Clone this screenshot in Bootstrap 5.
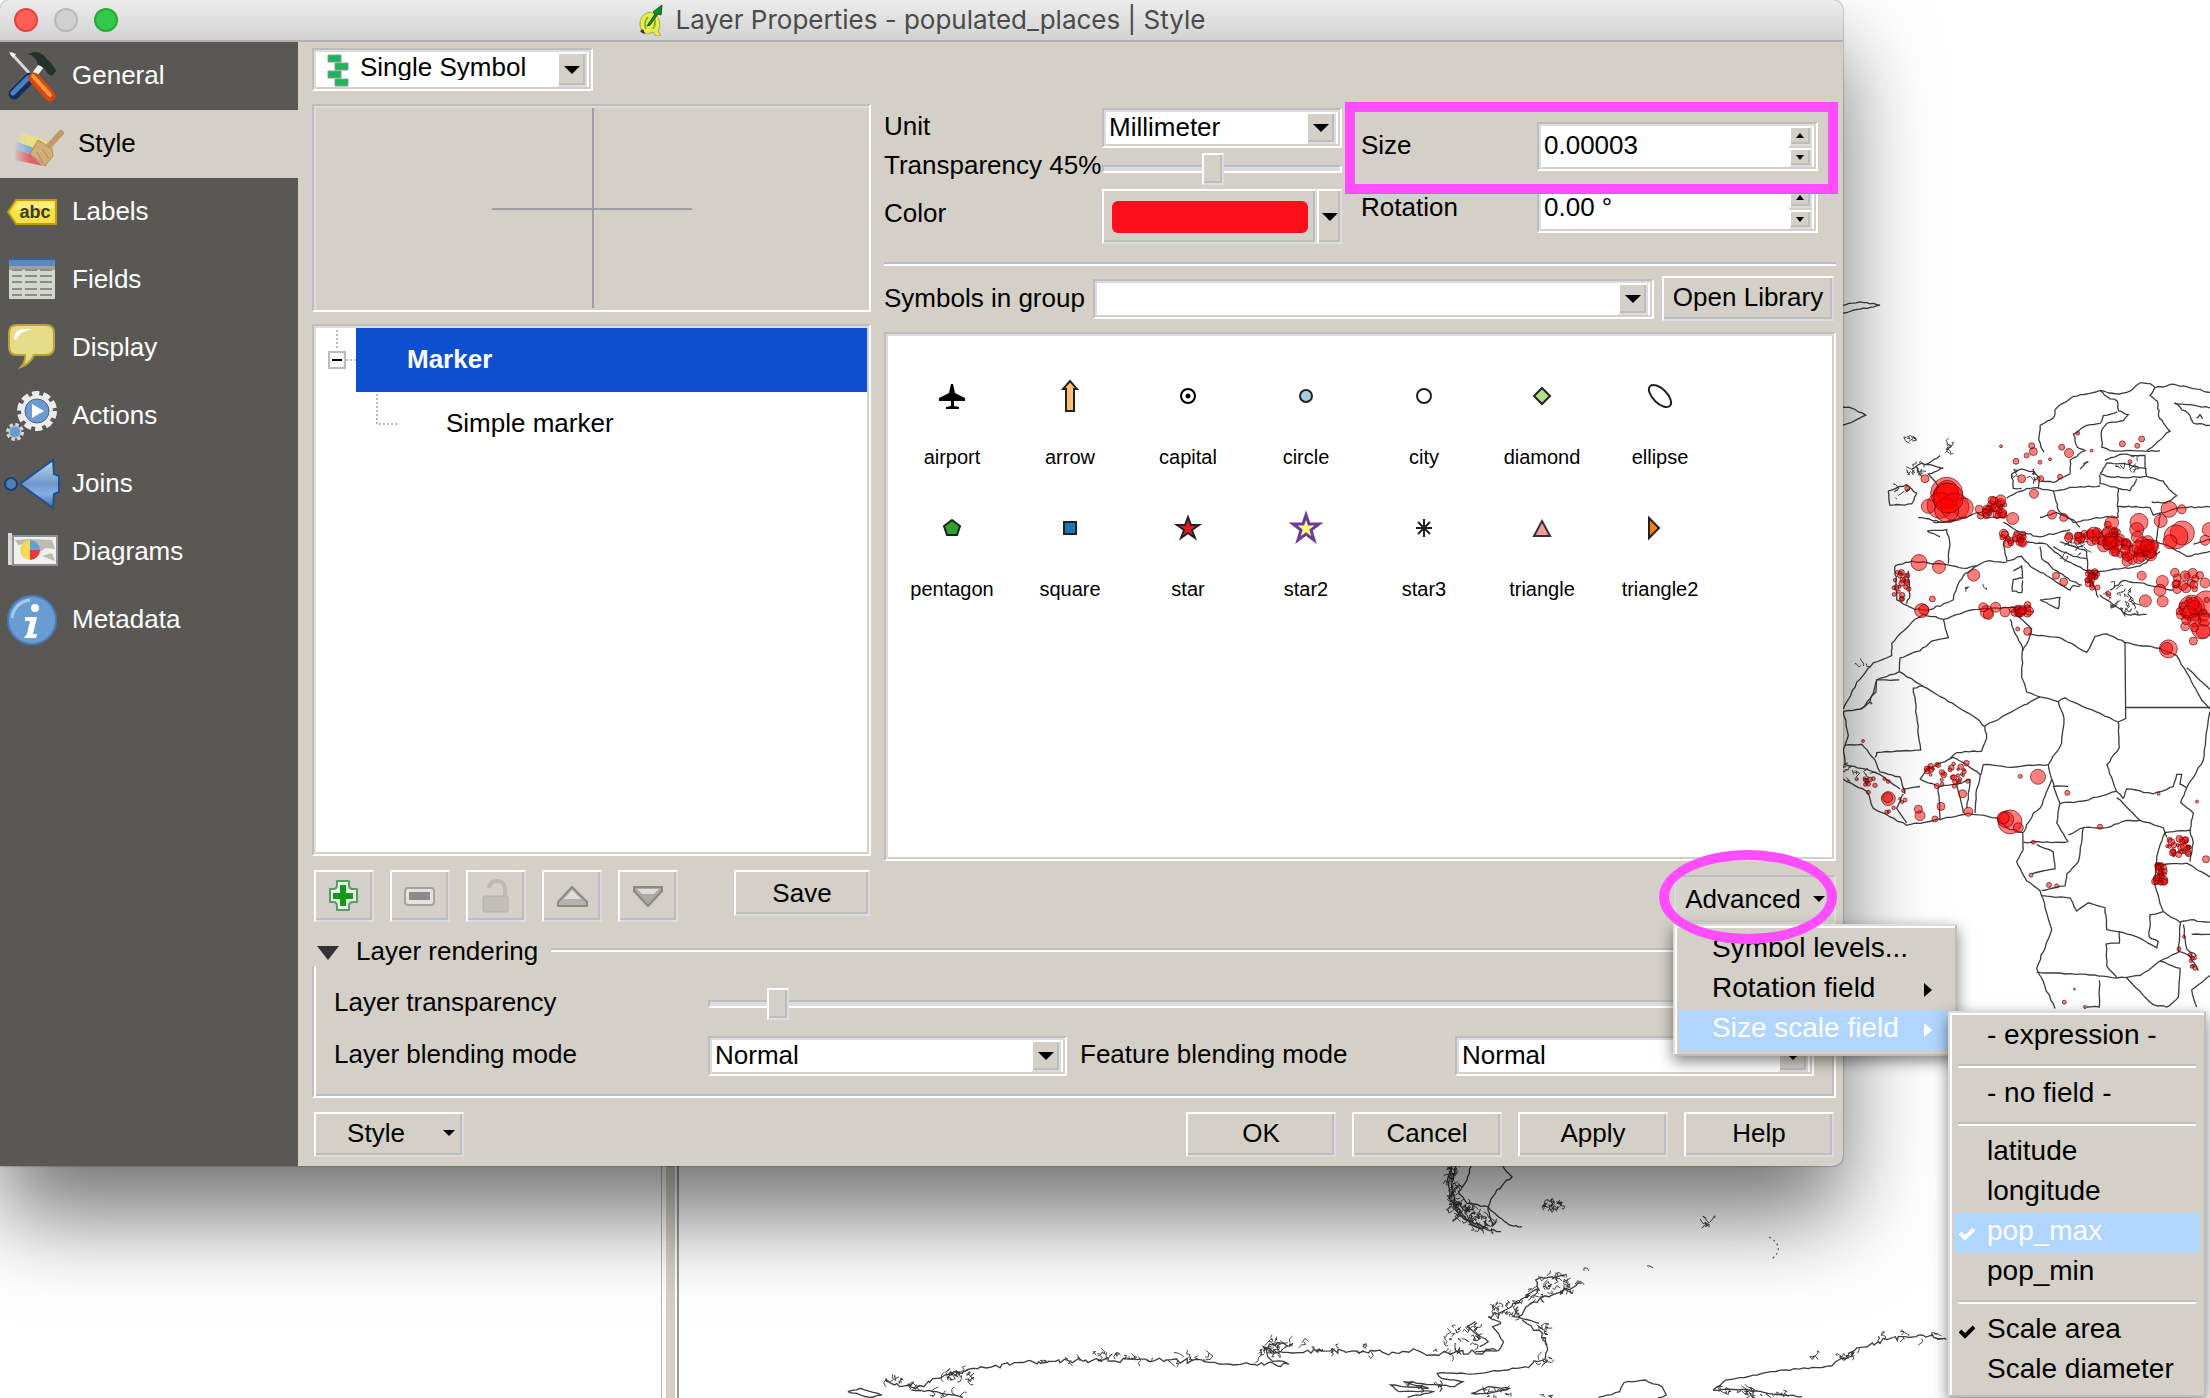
<!DOCTYPE html>
<html lang="en">
<head>
<meta charset="utf-8">
<meta name="viewport" content="width=device-width, initial-scale=1">
<title>Layer Properties - populated_places | Style</title>
<link href="https://cdn.jsdelivr.net/npm/bootstrap@5.3.0/dist/css/bootstrap.min.css" rel="stylesheet">
<style>
:root{--face:#d4d0c8;--dim:#bdbdbd;--soft:#dcdcde;--pink:#ff4dff}
body{font-family:"Liberation Sans",Arial,sans-serif;font-size:26px;line-height:30px;color:#000;background:#fff}
.desktop{min-height:100vh}
.map-canvas{inset:0;width:100%;height:100%}
.splitter{top:0;bottom:0;left:661px;width:18px;background:linear-gradient(90deg,#b5b5b0 0 1px,#fff 1px 5px,#d4d0c8 5px 14px,#fff 14px 16px,#9a9a9a 16px)}
.dialog{width:calc(100% - 367px);background:var(--face);border-radius:10px 10px 10px 0;box-shadow:0 0 2px rgba(0,0,0,.6),0 50px 90px rgba(0,0,0,.55)}
.titlebar{height:42px;gap:12px;background:linear-gradient(#ececec,#d2d2d2);border-bottom:2px solid #b1b1b1;border-radius:10px 10px 0 0;font-family:Inter,sans-serif;color:#4a4a4a}
.lights{left:14px;top:8px;gap:16px}
.light{width:24px;height:24px;padding:0;border:2px solid #e2463f;border-radius:50%;background:#ff5f57}
.light-off{background:#d0d0d0;border-color:#b9b9b9}
.light-max{background:#34c84a;border-color:#25aa35}
.side{flex:0 0 298px;background:#5a5855}
.side a{height:68px;color:#fff;text-decoration:none;padding-bottom:2px}
.side a svg{width:72px;height:68px;margin-top:2px}
.side a.active{background:var(--face);color:#000}
.side a.active svg{width:78px}
.pane{min-width:0;padding:6px 7px 9px 14px}
.right-col{min-width:0}
.sunk{border:2px solid;border-color:var(--dim) #fff #fff var(--dim);box-shadow:inset 2px 2px 0 var(--soft),inset -2px -2px 0 var(--face)}
.rise{border:2px solid;border-color:#fff var(--soft) var(--soft) #fff;box-shadow:inset -2px -2px 0 var(--dim);background:var(--face);border-radius:0;color:#000;padding:0}
.combo{height:40px;background:#fff;padding:2px 4px 2px 2px;min-width:0}
.combo select{appearance:none;border:0;background:transparent;color:#000;padding:0 0 7px 3px;outline:0;min-width:0}
.drop{width:30px;flex:0 0 30px}
.drop::after,.caret-s::after,.caret-l::after{content:"";border:8px solid transparent;border-top-color:#000;border-bottom:0}
.caret-s::after{border-width:6px 6px 0}
.combo-main{width:281px;height:43px}
.left-col{flex:0 0 559px}
.cols{gap:13px;margin-top:13px}
.preview{height:208px}
.preview svg{width:100%;height:100%}
.tree{height:532px;margin-top:12px;background:#fff;padding:2px}
.tree-row{height:64px}
.tree-row svg{flex:0 0 40px;width:40px;height:64px}
.tree-row.sub svg{flex-basis:90px;width:90px}
.tree-row .pick{background:#0c50d0;color:#fff;font-weight:700;padding:0 0 2px 51px}
.tree-row .leaf{padding:0 0 2px 40px}
.form-area{height:158px;gap:19px}
.form-l{flex:0 0 458px;padding-top:4px}
.form-l label,.form-l .lab{flex:0 0 218px;white-space:nowrap}
.form-r{min-width:0;padding:18px 18px 0 0}
.form-r label{flex:0 0 176px}
.range-row{height:41px}
.form-range{height:32px;padding:0}
.form-range::-webkit-slider-runnable-track{height:8px;border-radius:0;background:var(--soft);border:2px solid;border-color:var(--dim) #fff #fff var(--dim)}
.form-range::-webkit-slider-thumb{width:22px;height:32px;margin-top:-14px;border:2px solid;border-color:#fff var(--soft) var(--soft) #fff;box-shadow:inset -2px -2px 0 var(--dim);background:var(--face);border-radius:0}
.form-range::-webkit-slider-thumb:active{background:var(--face)}
.color-btn{width:215px;height:55px}
.swatch{width:196px;height:32px;border-radius:6px;background:#ff0d1b}
.color-arrow{width:25px;height:55px}
.spin{height:49px;background:#fff;padding:2px 4px 2px 2px;min-width:0}
.spin-gap{margin-bottom:13px}
.spin input{border:0;background:transparent;padding:0 0 4px 3px;min-width:0;outline:0}
.spin .steps{width:32px;background:var(--face);gap:2px}
.spin .steps button{flex:1}
.steps button::after{content:"";border:4px solid transparent;border-top:5px solid #000;border-bottom:0}
.steps button:first-child::after{border-top:0;border-bottom:5px solid #000}
.mark-box{inset:-20px -20px -23px -16px;border:10px solid var(--pink);pointer-events:none;z-index:3}
.etched{height:4px;border-top:2px solid var(--dim);border-bottom:2px solid #fff}
.group-row{margin-top:10px;padding-right:2px;gap:8px}
.group-row label,.open-lib{padding-bottom:2px}
.group-row .open-lib{width:172px;height:45px;padding-bottom:3px}
.symbols{height:529px;margin-top:11px;background:#fff;padding:30px 20px 0 7px;font-size:20px;line-height:26px}
.symbols figure{width:118px;height:132px;margin:0;text-align:center}
.symbols svg{width:64px;height:64px;display:block;margin:0 auto}
.symbols figcaption{margin-top:16px}
.tools{margin-top:14px;gap:16px}
.left-col .tools{padding:0 1px 0 2px}
.tool{width:60px;height:52px}
.tool svg{width:44px;height:44px;display:block;margin:auto}
.save{width:136px;height:46px;margin-left:auto}
.adv{width:162px;height:49px;background:#d6d3cc;border:2px solid;border-color:var(--dim) #e4e2de #e4e2de var(--soft);padding:0 0 2px;gap:12px;color:#000}
.mark-oval{left:-15px;top:-25px;width:178px;height:94px;border:10px solid var(--pink);border-radius:50%;pointer-events:none;z-index:9}
.pop{background:var(--face);border:2px solid;border-color:#dcdcdc var(--dim) var(--dim) #dcdcdc;box-shadow:inset 2px 2px 0 #fff,0 5px 14px rgba(0,0,0,.5);border-radius:0;padding:4px;font-size:28px;line-height:40px}
.pop-adv{left:-1px;top:49px;width:284px;z-index:5}
.pop-sub{left:273px;top:85px;width:258px;z-index:6}
.pop button{display:flex;align-items:center;width:100%;height:40px;border:0;background:transparent;color:#000;padding:0 0 4px 33px;text-align:left}
.pop button svg{width:14px;height:18px;margin:4px 16px 0 auto}
.pop-sub button{padding-left:33px;position:relative}
.pop-sub button svg{position:absolute;left:5px;top:12px;width:16px;height:18px;margin:0}
.pop button.lit{background:#b0d6ff;color:#fff}
.pop .etched{margin:7px 4px}
.group-head{height:28px;margin-top:14px}
.group-head button{border:0;background:transparent;padding:0 0 0 2px;color:#000;gap:16px}
.group-head button svg{width:26px;height:20px}
.group-line{height:18px;margin-left:13px;border-top:2px solid var(--dim);border-right:2px solid #fff;box-shadow:inset 0 2px 0 #fff,inset -2px 0 0 var(--dim)}
.group-body{height:132px;border:2px solid;border-color:transparent #fff #fff var(--dim);border-top:0;box-shadow:inset 2px 0 0 #fff,inset -2px -2px 0 var(--dim);padding:22px 20px 0 20px;gap:16px}
.group-body .line-a{height:32px}
.group-body .line-b{height:40px}
.group-body label{flex:0 0 374px;padding-bottom:4px}
.group-body .second{flex:0 0 375px;margin-left:13px}
.foot{margin-top:14px;gap:16px;padding:0 2px}
.foot button{width:150px;height:45px;padding-bottom:3px}
.foot .caret-s{gap:38px;padding-left:24px}
</style>
</head>
<body>
<div class="desktop position-relative overflow-hidden">
  <svg class="map-canvas position-absolute" id="map" viewBox="0 0 2210 1398" preserveAspectRatio="xMaxYMin slice" aria-label="World map"></svg>
  <div class="splitter position-absolute"></div>

  <div class="dialog position-relative">
    <div class="titlebar d-flex justify-content-center align-items-center position-relative">
      <div class="lights d-flex position-absolute">
        <button class="light" aria-label="Close"></button><button class="light light-off" aria-label="Minimize"></button><button class="light light-max" aria-label="Zoom"></button>
      </div>
      <svg width="26" height="32" viewBox="0 0 26 32"><path d="M12 8C6 9 2 14 2 20c0 5 3 9 8 10l5-2 3 4h5l-3-5c3-5 2-12-2-16z" fill="#e4ec4e" stroke="#a3ab3c"/><path d="M10 13c-3 3-4 8-2 12M16 14c2 4 1 8-1 11" stroke="#9ea63a" stroke-width="2" fill="none"/><path d="M9 22l8-12-2-2 9-7-1 10-3-1-8 11z" fill="#168c22" stroke="#0c5c14"/><path d="M2 27l3-2 2 5-3-1z" fill="#333"/></svg>
      <span>Layer Properties - populated_places | Style</span>
    </div>

    <div class="d-flex">
      <nav class="side d-flex flex-column">
        <a href="#" class="d-flex align-items-center"><svg viewBox="0 0 72 68"><path d="M11 11l20 22" stroke="#d8d8d8" stroke-width="3"/><path d="M9 10l7 2-3 4z" fill="#fff"/><path d="M30 36L14 52" stroke="#152f5c" stroke-width="11" stroke-linecap="round"/><path d="M28 36L13 51" stroke="#4a7fc0" stroke-width="5" stroke-linecap="round"/><path d="M35 32l6-8" stroke="#eee" stroke-width="6"/><path d="M28 12c8-4 15-1 18 4 4 4 7 6 10 13l-4 5-5-3c-1-4-5-7-9-8-1-5-4-9-10-11z" fill="#26302f"/><path d="M34 36l16 18" stroke="#d8480c" stroke-width="11" stroke-linecap="round"/><path d="M33 34l17 19" stroke="#ff9a3c" stroke-width="4" stroke-linecap="round" stroke-dasharray="5 2"/></svg>General</a>
        <a href="#" class="d-flex align-items-center active"><svg viewBox="0 0 78 68"><defs><linearGradient id="fade"><stop offset="0" stop-color="#fff" stop-opacity="0"/><stop offset=".3" stop-color="#fff"/></linearGradient><mask id="fm"><rect x="12" width="60" height="68" fill="url(#fade)"/></mask></defs><g mask="url(#fm)"><path d="M20 22l28 10-6 9-24-9z" fill="#e9e27c"/><path d="M17 32l24 8-6 6-20-5z" fill="#7fabdd"/><path d="M16 40l14 4 13 12-28-6z" fill="#e0636c"/></g><path d="M61 23L49 36" stroke="#c29b62" stroke-width="6" stroke-linecap="round"/><path d="M38 30l14 9 1 7-8 10-15-12z" fill="#d1ae78" stroke="#b08a54"/><path d="M37 42l6 11M42 39l7 10" stroke="#b08a54"/></svg>Style</a>
        <a href="#" class="d-flex align-items-center"><svg viewBox="0 0 72 68"><path d="M8 34l8-12h40v24H16z" fill="#f8e142" stroke="#c09a14" stroke-width="2" stroke-linejoin="round"/><path d="M14 32l5-8h35v6z" fill="#fff59a" opacity=".6"/><text x="35" y="40" font-size="18" font-weight="700" text-anchor="middle" fill="#3a3a30" font-family="Liberation Sans">abc</text></svg>Labels</a>
        <a href="#" class="d-flex align-items-center"><svg viewBox="0 0 72 68"><path d="M9 12h46v41H9z" fill="#d3d6cf"/><path d="M9 12h46v8H9z" fill="#5b88c0"/><path d="M9 12h46v2H9z" fill="#3a5f92"/><path d="M9 20h46v4H9z" fill="#a0a29c"/><path d="M12 24h10m3 0h12m3 0h12M12 30h10m3 0h12m3 0h12M12 36h10m3 0h12m3 0h12M12 43h10m3 0h12m3 0h12M12 49h10m3 0h12m3 0h12" stroke="#8a8c86" stroke-width="2"/></svg>Fields</a>
        <a href="#" class="d-flex align-items-center"><svg viewBox="0 0 72 68"><path d="M17 11h29q8 0 8 8v14q0 8-8 8H34q-4 9-13 12 5-6 4-12h-8q-8 0-8-8V19q0-8 8-8z" fill="#e6db86" stroke="#b8a03a" stroke-width="2"/><path d="M14 25q0-9 9-10h10q-13 2-17 11z" fill="#fff"/></svg>Display</a>
        <a href="#" class="d-flex align-items-center"><svg viewBox="0 0 72 68"><circle cx="37" cy="29" r="17" fill="none" stroke="#ececec" stroke-width="6" stroke-dasharray="7 3.7"/><circle cx="37" cy="29" r="14" fill="#6d9bd0" stroke="#ececec" stroke-width="4"/><circle cx="37" cy="29" r="12" fill="none" stroke="#3f6496"/><path d="M32 22l12 7-12 7z" fill="#fff"/><circle cx="15" cy="50" r="7.500" fill="none" stroke="#d8d8d8" stroke-width="3" stroke-dasharray="3.500 2.400"/><circle cx="15" cy="50" r="6" fill="#6d9bd0" stroke="#d8d8d8"/></svg>Actions</a>
        <a href="#" class="d-flex align-items-center"><svg viewBox="0 0 72 68"><defs><linearGradient id="jn" x2="0" y2="1"><stop offset="0" stop-color="#b5dcec"/><stop offset=".5" stop-color="#6f98cc"/><stop offset=".7" stop-color="#86aee8"/><stop offset="1" stop-color="#3c70a8"/></linearGradient></defs><circle cx="11" cy="34" r="6" fill="#4d7fb8" stroke="#1e3f6e" stroke-width="2"/><path d="M20 34l33-24 1 14 5 2v16l-5 2-1 14z" fill="url(#jn)" stroke="#23508c" stroke-width="2"/></svg>Joins</a>
        <a href="#" class="d-flex align-items-center"><svg viewBox="0 0 72 68"><path d="M13 18h44v29H13z" fill="#f0f1ee" stroke="#8d9094" stroke-width="2"/><path d="M30 21l22 1 3 9-9-1-6 4-6-9-16 2-3-5zM42 38l10-3 3 8z" fill="#b9bdb2"/><path d="M8 15h4v32H8z" fill="#d8d8d8"/><circle cx="30" cy="32" r="10" fill="#f2d95a"/><path d="M30 32V22a10 10 0 0 1 10 10z" fill="#6d9bd0"/><path d="M30 32h10a10 10 0 0 1-10 10z" fill="#e03a3a"/></svg>Diagrams</a>
        <a href="#" class="d-flex align-items-center"><svg viewBox="0 0 72 68"><circle cx="32" cy="34" r="24" fill="#6a9cd4" stroke="#4a7cb8" stroke-width="2"/><path d="M12 32a20 20 0 0 1 18-18" stroke="#a9c8ea" stroke-width="3" fill="none"/><circle cx="35" cy="22" r="4" fill="#fff"/><path d="M25 31h12l-4 17h4l-1 4H24l3-4h0l3-13h-5z" fill="#fff"/></svg>Metadata</a>
      </nav>

      <main class="pane flex-grow-1">
        <div class="combo combo-main sunk d-flex align-items-stretch">
          <svg width="36" height="36" viewBox="0 0 36 36"><g fill="#1fb45a" stroke="#8a9a90" stroke-width="1"><path d="M12 3h13v7H12zM19 11h13v7H19zM12 19h13v7H12zM19 27h13v7H19z"/></g></svg>
          <select class="flex-grow-1 ps-2" aria-label="Renderer"><option>Single Symbol</option></select><span class="drop rise d-flex align-items-center justify-content-center"></span>
        </div>

        <div class="cols d-flex">
          <section class="left-col">
            <div class="preview sunk"><svg viewBox="0 0 555 204"><path d="M279 2v200M178 103h200" stroke="#a0a0a4" stroke-width="2"/></svg></div>
            <div class="tree sunk">
              <div class="tree-row d-flex"><svg viewBox="0 0 40 64"><path d="M21 2v20M30 32h10" stroke="#bbb" stroke-width="2" stroke-dasharray="2 2"/><path d="M13 24h16v16H13z" fill="#fff" stroke="#bbb" stroke-width="2"/><path d="M16 32h10" stroke="#000" stroke-width="2"/></svg><div class="pick flex-grow-1 d-flex align-items-center">Marker</div></div>
              <div class="tree-row sub d-flex align-items-center"><svg viewBox="0 0 90 64"><path d="M61 2v30h20" fill="none" stroke="#bbb" stroke-width="2" stroke-dasharray="2 2"/></svg><span class="leaf">Simple marker</span></div>
            </div>
            <div class="tools d-flex align-items-start">
              <button class="tool rise" aria-label="Add"><svg viewBox="0 0 44 44"><path d="M15 7h12v4q0 4 4 4h4v13h-4q-4 0-4 4v4H15v-4q0-4-4-4H8V15h3q4 0 4-4z" fill="#e6f2e2" stroke="#5b9a66" stroke-width="2" stroke-linejoin="round"/><path d="M18 11h6v8h7v6h-7v7h-6v-7h-7v-6h7z" fill="#149a1a"/></svg></button>
              <button class="tool rise" aria-label="Remove"><svg viewBox="0 0 44 44"><rect x="7" y="14" width="29" height="17" rx="3" fill="#e4e2de" stroke="#a5a39e" stroke-width="2"/><path d="M11 18h21v8H11z" fill="#8c8b88"/></svg></button>
              <button class="tool rise" aria-label="Lock"><svg viewBox="0 0 44 44"><path d="M15 14q1-7 8-7t8 7v9" fill="none" stroke="#bdbab3" stroke-width="4"/><rect x="9" y="22" width="25" height="16" rx="2" fill="#c2bfb8" stroke="#b3b0a9"/></svg></button>
              <button class="tool rise" aria-label="Move up"><svg viewBox="0 0 44 44"><path d="M22 13L8 28v4h29v-4z" fill="#b4b2ad" stroke="#8b8985" stroke-width="2" stroke-linejoin="round"/><path d="M22 16l-8 9h17z" fill="#e0deda"/></svg></button>
              <button class="tool rise" aria-label="Move down"><svg viewBox="0 0 44 44"><path d="M22 32L8 17v-4h28v4z" fill="#aaa8a3" stroke="#8b8985" stroke-width="2" stroke-linejoin="round"/><path d="M11 15h22l-5 5H16z" fill="#dddbd6"/></svg></button>
              <button class="save rise">Save</button>
            </div>
          </section>

          <section class="right-col flex-grow-1">
            <div class="form-area d-flex">
              <div class="form-l">
                <div class="d-flex align-items-center"><label for="unit" class="pb-1">Unit</label><div class="combo sunk d-flex flex-grow-1"><select id="unit" class="flex-grow-1"><option>Millimeter</option></select><span class="drop rise d-flex align-items-center justify-content-center"></span></div></div>
                <div class="range-row d-flex align-items-center"><label for="tr" class="pb-2">Transparency 45%</label><input id="tr" type="range" class="form-range" value="46"></div>
                <div class="d-flex align-items-center"><span class="lab pb-2">Color</span><button class="color-btn rise d-flex align-items-center justify-content-center" aria-label="Color"><span class="swatch"></span></button><button class="color-arrow rise caret-l d-flex align-items-center justify-content-center" aria-label="Color menu"></button></div>
              </div>
              <div class="form-r flex-grow-1">
                <div class="spin-gap position-relative d-flex align-items-center"><label for="sz" class="pb-1">Size</label><div class="spin sunk d-flex flex-grow-1"><input id="sz" class="flex-grow-1" value="0.00003"><span class="steps d-flex flex-column"><button class="rise d-flex align-items-center justify-content-center" aria-label="Up"></button><button class="rise d-flex align-items-center justify-content-center" aria-label="Down"></button></span></div><div class="mark-box position-absolute"></div></div>
                <div class="d-flex align-items-center"><label for="rot" class="pb-1">Rotation</label><div class="spin sunk d-flex flex-grow-1"><input id="rot" class="flex-grow-1" value="0.00 °"><span class="steps d-flex flex-column"><button class="rise d-flex align-items-center justify-content-center" aria-label="Up"></button><button class="rise d-flex align-items-center justify-content-center" aria-label="Down"></button></span></div></div>
              </div>
            </div>
            <div class="etched"></div>
            <div class="group-row d-flex align-items-center"><label for="grp">Symbols in group</label><div class="combo sunk d-flex flex-grow-1"><select id="grp" class="flex-grow-1"><option></option></select><span class="drop rise d-flex align-items-center justify-content-center"></span></div><button class="open-lib rise">Open Library</button></div>

            <div class="symbols sunk d-flex flex-wrap align-content-start">
              <figure><svg viewBox="-32 -32 64 64"><path d="M-1-12h2l2 9 10 5v3H2l0 5 5 1v2H-6v-2l5-1V5h-12V2l10-5z"/></svg><figcaption>airport</figcaption></figure>
              <figure><svg viewBox="-32 -32 64 64"><path d="M-4 15V-7h-3l7-8 7 8H4v22z" fill="#fdbf6f" stroke="#222" stroke-width="2"/></svg><figcaption>arrow</figcaption></figure>
              <figure><svg viewBox="-32 -32 64 64"><circle r="7" fill="#fff" stroke="#000" stroke-width="2"/><circle r="2.500"/></svg><figcaption>capital</figcaption></figure>
              <figure><svg viewBox="-32 -32 64 64"><circle r="6" fill="#a6cee3" stroke="#222" stroke-width="2"/></svg><figcaption>circle</figcaption></figure>
              <figure><svg viewBox="-32 -32 64 64"><circle r="7" fill="#fff" stroke="#222" stroke-width="2"/></svg><figcaption>city</figcaption></figure>
              <figure><svg viewBox="-32 -32 64 64"><path d="M0-8l8 8-8 8-8-8z" fill="#b2df8a" stroke="#222" stroke-width="2"/></svg><figcaption>diamond</figcaption></figure>
              <figure><svg viewBox="-32 -32 64 64"><ellipse rx="14" ry="7" transform="rotate(45)" fill="#fff" stroke="#222" stroke-width="2"/></svg><figcaption>ellipse</figcaption></figure>
              <figure><svg viewBox="-32 -32 64 64"><path d="M0-8l8 6-3 9H-5l-3-9z" fill="#33a02c" stroke="#123" stroke-width="2"/></svg><figcaption>pentagon</figcaption></figure>
              <figure><svg viewBox="-32 -32 64 64"><path d="M-6-6H6V6H-6z" fill="#1f78b4" stroke="#222" stroke-width="2"/></svg><figcaption>square</figcaption></figure>
              <figure><svg viewBox="-32 -32 64 64"><path d="M0-11l3 8h8L4 2l3 8-7-5-7 5 3-8-7-5h8z" fill="#e31a1c" stroke="#222" stroke-width="2"/></svg><figcaption>star</figcaption></figure>
              <figure><svg viewBox="-32 -32 64 64"><path d="M0-13l3 9h10L5 2l3 10-8-6-8 6 3-10-8-6h10z" fill="#ffff80" stroke="#6a3d9a" stroke-width="3"/></svg><figcaption>star2</figcaption></figure>
              <figure><svg viewBox="-32 -32 64 64"><path d="M0-9V9M-8 0H8M-6-6L6 6M6-6L-6 6" stroke="#222" stroke-width="2"/></svg><figcaption>star3</figcaption></figure>
              <figure><svg viewBox="-32 -32 64 64"><path d="M0-7l8 15H-8z" fill="#fb9a99" stroke="#333" stroke-width="2"/></svg><figcaption>triangle</figcaption></figure>
              <figure><svg viewBox="-32 -32 64 64"><path d="M-11-10L-1 0l-10 10z" fill="#ff7f00" stroke="#222" stroke-width="2"/></svg><figcaption>triangle2</figcaption></figure>
            </div>

            <div class="tools d-flex justify-content-end">
              <div class="position-relative">
                <button class="adv caret-s d-flex align-items-center justify-content-center">Advanced</button>
                <div class="pop pop-adv position-absolute">
                  <button>Symbol levels...</button>
                  <button>Rotation field<svg viewBox="0 0 14 18"><path d="M3 2l8 7-8 7z"/></svg></button>
                  <button class="lit">Size scale field<svg viewBox="0 0 14 18"><path d="M3 2l8 7-8 7z" fill="#fff"/></svg></button>
                  <div class="pop pop-sub position-absolute">
                    <button>- expression -</button>
                    <div class="etched"></div>
                    <button>- no field -</button>
                    <div class="etched"></div>
                    <button>latitude</button>
                    <button>longitude</button>
                    <button class="lit"><svg viewBox="0 0 16 18"><path d="M1 8l5 5L15 4" fill="none" stroke="#fff" stroke-width="4"/></svg>pop_max</button>
                    <button>pop_min</button>
                    <div class="etched"></div>
                    <button><svg viewBox="0 0 16 18"><path d="M1 8l5 5L15 4" fill="none" stroke="#000" stroke-width="4"/></svg>Scale area</button>
                    <button>Scale diameter</button>
                  </div>
                </div>
                <div class="mark-oval position-absolute"></div>
              </div>
            </div>
          </section>
        </div>

        <div class="group-head d-flex align-items-end"><button class="d-flex align-items-center"><svg viewBox="0 0 26 20"><path d="M3 5h22L14 19z" fill="#333"/></svg><span>Layer rendering</span></button><div class="group-line flex-grow-1"></div></div>
        <div class="group-body d-flex flex-column">
          <div class="line-a d-flex align-items-center"><label for="lt">Layer transparency</label><input id="lt" type="range" class="form-range" max="1000" value="53"></div>
          <div class="line-b d-flex align-items-center"><label for="lb">Layer blending mode</label><div class="combo sunk d-flex flex-grow-1"><select id="lb" class="flex-grow-1"><option>Normal</option></select><span class="drop rise d-flex align-items-center justify-content-center"></span></div>
          <label for="fb" class="second">Feature blending mode</label><div class="combo sunk d-flex flex-grow-1"><select id="fb" class="flex-grow-1"><option>Normal</option></select><span class="drop rise d-flex align-items-center justify-content-center"></span></div></div>
        </div>

        <div class="foot d-flex">
          <button class="rise caret-s d-flex align-items-center justify-content-center me-auto">Style</button>
          <button class="rise">OK</button><button class="rise">Cancel</button><button class="rise">Apply</button><button class="rise">Help</button>
        </div>
      </main>
    </div>
  </div>
</div>

<script src="https://cdn.jsdelivr.net/npm/bootstrap@5.3.0/dist/js/bootstrap.bundle.min.js"></script>
<script>
// Country outlines are stored in two sheets, each with its own origin and scale.
const map = document.getElementById('map');
let seed = 7;
const rnd = () => (seed = (seed * 16807) % 2147483647) / 2147483647;
const sheets = { n: [1840, 280, 1 / 3, 760 / 1568], s: [640, 1160, 1330 / 1568, 1 / 3] };
function add(tag, at) {
  const e = document.createElementNS('http://www.w3.org/2000/svg', tag);
  for (const k in at) e.setAttribute(k, at[k]);
  map.appendChild(e);
}
// Draws each "x y x y ..." run, breaking long legs into small uneven steps.
function lines(sheet, amp, step, text) {
  const [ox, oy, sx, sy] = sheets[sheet];
  for (const run of text.split('|')) {
    const v = run.trim().split(/\s+/).map(Number), p = [];
    for (let i = 0; i < v.length; i += 2) p.push([ox + v[i] * sx, oy + v[i + 1] * sy]);
    let d = 'M' + p[0];
    for (let i = 1; i < p.length; i++) {
      const [a, b] = [p[i - 1], p[i]], n = Math.ceil(Math.hypot(b[0] - a[0], b[1] - a[1]) / step);
      for (let k = 1; k <= n; k++) {
        const j = k < n ? amp : 0;
        d += 'L' + (a[0] + (b[0] - a[0]) * k / n + (rnd() - .5) * j).toFixed(1) + ' ' + (a[1] + (b[1] - a[1]) * k / n + (rnd() - .5) * j).toFixed(1);
      }
    }
    add('path', { d, fill: 'none', stroke: '#3c3c3c', 'stroke-width': 1.3 });
  }
}
// Scatters n small islets over a w by h patch.
function islets(sheet, x, y, w, h, n) {
  const [ox, oy, sx, sy] = sheets[sheet];
  let d = '';
  for (let i = 0; i < n; i++) {
    const r = () => ((rnd() - .5) * 8).toFixed(1);
    d += `M${(ox + (x + (rnd() - .5) * w) * sx).toFixed(1)} ${(oy + (y + (rnd() - .5) * h) * sy).toFixed(1)}l${r()} ${r()} ${r()} ${r()} ${r()} ${r()}`;
  }
  add('path', { d, fill: 'none', stroke: '#333', 'stroke-width': .9 });
}
function dot(x, y, r) {
  const [ox, oy, sx, sy] = sheets.n;
  add('circle', { cx: ox + x * sx, cy: oy + y * sy, r, fill: '#f00', 'fill-opacity': .5, stroke: '#500', 'stroke-width': .8, 'stroke-opacity': .8 });
}
function cluster(x, y, w, h, n, r0, r1) {
  for (let i = 0; i < n; i++) dot(x + (rnd() - .5) * w, y + (rnd() - .5) * h, r0 + rnd() * (r1 - r0));
}
// Europe
lines('n', 1.5, 4, `6 52 60 45 120 52 60 60 6 68|6 262 35 264 77 279 40 292 6 300|600 300 596 330 612 355|600 300 640 285 645 268 700 240 780 228 830 235 860 232 900 212 930 214 945 222 1000 215 1060 224 1110 232|780 228 810 245 832 250 836 270 865 278 850 290 800 296 785 310 785 345 810 352 960 352|832 272 790 280 780 296 740 300 700 318 712 345 735 352 690 372 690 400 640 418 605 415|945 222 930 238 952 250 958 285 990 312 950 335 920 352|1003 254 1110 264|1003 254 1050 280 1060 295 1110 300|1070 285 1080 278 1088 286|795 372 840 360 915 362 915 385 920 405|780 400 800 378 860 380 920 390|780 400 800 405 865 408 920 405|778 402 780 420 835 430 870 435 890 410|920 405 970 415 985 430 1010 445 975 460 935 458|835 430 832 465 835 490|832 467 930 470 940 485 1020 470 1110 468|640 435 700 428 780 425|640 435 655 475 700 500 800 488 835 490|500 450 560 430 600 430 640 435|515 400 545 390 580 395 600 410 595 430|515 400 520 430 545 430|262 518 320 515 330 545 325 585|262 518 300 530|280 500 330 500 410 480 440 490 490 490|325 588 380 595 410 590 440 580 500 582|500 530 490 545 500 580|490 500 540 520 600 530 660 520 690 515|600 490 650 480 700 495 720 510|560 540 620 545|500 580 545 570 570 590 620 610 690 640 700 630 720 632|600 550 605 575 650 600 690 620 725 630|600 660 660 655 655 678 600 660|520 600 545 590 548 615 520 618 517 642 545 645 548 620|620 545 680 580 740 600|660 540 740 560 742 595|640 550 700 570 740 575|742 595 760 630 775 655|740 600 800 600 900 590 960 560|165 590 215 580 325 588|165 590 170 660 225 680 270 680 340 660 350 635 370 610 410 590|205 600 210 650 200 668|215 390 245 378 310 388 265 400 300 430|235 490 310 500 380 490|245 405 230 385|145 435 200 422 230 440 215 462 150 465 145 435|780 650 800 660 860 690 920 690|810 640 850 620 900 625 1000 640|960 480 950 540 990 550 1040 570 1110 560|1060 545 1110 535|730 380 745 375 720 390|320 350 335 343|260 380 300 362`);
islets('n', 212, 323, 24, 6, 5); islets('n', 328, 346, 14, 10, 5); islets('n', 225, 388, 50, 24, 10);
islets('n', 850, 660, 90, 60, 26); islets('n', 560, 400, 70, 30, 8); islets('n', 190, 440, 70, 25, 6);
islets('n', 410, 636, 60, 16, 3); islets('n', 700, 555, 90, 50, 12); islets('n', 870, 375, 90, 20, 8);
// Africa
lines('n', 1.3, 5, `225 700 180 730 155 750 155 775 100 790 50 830 10 885|225 700 250 690 310 700 400 680 520 675 580 685|310 700 325 738 275 745 240 765 180 780 178 808|178 808 110 825 108 850 65 885 10 890|178 808 410 905 435 922 440 945 425 972 350 975 330 988|178 825 110 825 90 870 60 885|250 838 220 842 242 970 110 975 105 985|510 700 520 720 548 760 545 820 560 850 600 860|530 690 575 720 565 745 548 765|600 860 435 920|600 860 655 870 675 862 835 912|565 730 660 738 740 768 765 735 800 730 855 748|655 870 672 905 665 955 625 1000|835 912 838 965 800 1000 830 1055 850 1070|850 1070 860 1050 940 1060 1000 1045 1010 1020 1025 1020 1020 1040 1040 1048|1040 1048 1090 990 1100 930 1110 890|1040 1048 1022 1078 1060 1100 1050 1135|425 1015 430 1000 500 1005 625 1000 635 1030 600 1090 580 1100 550 1140|405 1100 410 1050 425 1015|10 890 25 940 10 970 15 1000|15 960 65 958 105 990 120 1015 180 1025 195 1060|10 1030 80 1055 100 1090 200 1125 280 1115 385 1100 470 1110 500 1130 548 1140 550 1175 530 1200 560 1240 600 1260 635 1340 590 1420 645 1503|240 1030 260 1010 340 985 380 1000 420 1020|240 1030 300 1045 350 1040 390 1030|295 1045 300 1115|350 1040 370 1100|390 1030 380 1090|190 1050 240 1045|190 1060 170 1090 200 1120|635 1030 660 1080 650 1120 685 1160|640 1045 685 1045|660 1080 730 1075 830 1055|830 1068 900 1115 970 1130 980 1150|685 1145 730 1130 800 1130 860 1115 900 1115|730 1130 715 1200 680 1225 675 1250 605 1260|550 1160 680 1160|590 1165 640 1180 645 1215 575 1225|605 1270 690 1275 710 1302 745 1285 795 1295 800 1340 838 1345 838 1368 798 1370 800 1415 830 1438|590 1428 720 1432 830 1440 900 1435 960 1405|778 1445 778 1500 740 1500|838 1345 900 1358 950 1378 955 1365 928 1355 930 1310 970 1303|970 1303 1020 1325 1050 1320 1110 1325|960 1405 1020 1385|960 1405 1020 1420 1015 1480 980 1500 940 1495 860 1440|1022 1325 1015 1385 1050 1395 1075 1425|1030 1330 1040 1380 1070 1395|1055 1350 1110 1350|1110 1435 1055 1465 1070 1500|970 1303 945 1250 950 1190 975 1140 1050 1135 1060 1160 1050 1200|955 1205 1040 1203 1110 1232|855 748 960 760 1010 775 1040 810 1080 860 1110 885|1040 800 1110 845|15 1000 80 1010 130 1025 180 1050`);
lines('n', 0, 900, '855 748 857 905 835 912|857 882 1110 882');
islets('n', 50, 1015, 80, 30, 10); islets('n', 40, 795, 80, 14, 3);
// Cities
[[320,440,16],[318,445,13],[322,436,11],[300,465,13],[345,468,14],[370,470,10],[265,467,7],[320,475,12],[325,450,15],
[237,583,8],[297,592,6.5],[401,609,6],[245,682,7],[252,680,5],[277,658,3],[518,492,6],[636,484,4.5],[671,490,4],[582,441,4.5],[580,354,4],[575,342,3],[560,362,2.5],[528,374,3],[665,345,3],[687,357,4.5],[713,316,2],[600,376,2],[630,370,1.5],[660,406,2.5],[847,338,3],[905,328,3],[892,342,2.5],[870,375,2],[255,410,4],[202,430,2.5],[545,410,4],[602,410,3],[483,343,1.5],[755,352,1.5],
[897,500,9],[890,515,7],[987,473,8],[962,497,6.5],[1025,473,4.5],[1027,522,12],[1008,530,12],[990,540,7],[1108,515,7],[1095,537,5],[916,662,6],[968,663,5.5],[967,622,6],[960,640,6],[905,610,4.5],[1012,615,4],[1055,677,13],[1050,680,10],[1100,668,13],[1085,720,10],[1090,725,7],[1060,745,4],[1095,625,5],[985,761,9],[980,760,6],[440,685,6.5],[445,690,5],[467,675,5],[495,685,5],[430,675,4.5],[563,725,4],[533,720,2],[648,610,3.5],[671,623,4],[805,648,2.5],
[594,1025,7.5],[541,1024,2],[682,1058,2.5],[510,1118,12],[497,1113,8],[490,1110,6],[535,1130,5],[145,1070,7],[143,1068,5],[240,1105,5],[235,1092,4],[303,1086,4],[385,1097,4.5],[368,1060,4],[285,1112,3],[780,1128,2.5],[956,1060,1.5],[1071,1076,1.5],[1098,1195,3.5],[580,1160,2],[573,1228,2],[627,1248,2.5],[650,1250,2],[140,1098,2],[195,1073,2],[85,1057,2],[93,873,1],[69,951,1.5],[673,1490,2],[703,1463,1],[735,1500,1.5],[1032,1355,1.5],[1017,1380,2],[1050,1392,2],[1065,1420,2]].forEach(c => dot(...c));
cluster(185, 630, 50, 60, 22, 1.5, 3); cluster(470, 465, 50, 40, 20, 2, 5); cluster(430, 480, 30, 20, 6, 3, 4);
cluster(520, 533, 70, 20, 18, 2.5, 4.5); cluster(715, 532, 80, 18, 12, 3, 5); cluster(800, 525, 80, 50, 22, 3, 7);
cluster(860, 555, 120, 55, 34, 3, 6); cluster(920, 553, 50, 30, 12, 4, 7); cluster(758, 618, 36, 34, 22, 2, 3);
cluster(540, 685, 70, 30, 14, 2.5, 4.5); cluster(1045, 620, 90, 36, 14, 2.5, 5); cluster(1060, 690, 90, 60, 16, 2.5, 7);
cluster(320, 1020, 130, 50, 34, 1.2, 3); cluster(100, 1035, 110, 20, 12, 1.2, 2.5); cluster(1015, 1170, 70, 36, 28, 1.2, 3.5);
cluster(958, 1225, 34, 40, 28, 1.5, 3.5); cluster(170, 1075, 60, 50, 5, 1, 2); cluster(1060, 1405, 20, 30, 6, 1, 2);
// South America and Antarctica
lines('s', 2, 4, `957 18 952 60 955 120 965 160 985 200 1015 215|962 18 957 70 960 130 975 180 1000 205|980 18 975 60 965 95 975 130 1000 140 1005 200|1017 18 1028 50 1010 90 1000 140 1010 165 1025 195 1040 200`);
islets('s', 957, 50, 8, 70, 16); islets('s', 961, 110, 12, 90, 34); islets('s', 972, 155, 20, 60, 34); islets('s', 992, 188, 34, 40, 34);
islets('s', 1077, 137, 22, 20, 20); islets('s', 1259, 190, 10, 12, 6);
add('path', { d: 'M1769 1237Q1786 1247 1772 1259', fill: 'none', stroke: '#666', 'stroke-width': 1.3, 'stroke-dasharray': '2 3' });
add('path', { d: 'M1584 1271v-3l3 0 2 3M1647 1266h3l3 2', fill: 'none', stroke: '#444', 'stroke-width': 1 });
lines('s', 5, 4, `290 655 300 675 325 685 350 655 395 625|395 625 470 605 540 600 620 600 665 605|700 615 765 612 740 590 735 560 770 550|735 573 830 573 895 580 915 570 930 585 1010 572|1015 490 1000 470 1020 450 1045 410 1060 390 1056 360 1090 345|1035 470 1050 430 1080 400 1110 370|1040 480 1060 510 1070 570 1065 600 1045 620|1405 618 1425 580 1460 545 1490 530 1510 525 1540 538`);
lines('s', 1.5, 5, `665 605 700 615|1015 490 1005 500 1018 545 1012 572 985 575|985 485 975 500 1000 545 990 560|1035 440 1030 470 1060 490|1045 620 990 640 940 640 945 655 970 665 960 680 900 665 930 685 885 675 895 695 935 695 905 712|980 700 1000 680 1025 685 1000 700 980 700|1130 712 1155 695 1160 668 1185 660 1205 680 1210 705 1200 714|1265 690 1280 660 1350 630 1405 618|1265 690 1300 688 1330 700 1370 710|245 695 260 685 285 705 270 712 245 695|320 690 350 695 380 712`);
islets('s', 375, 648, 36, 30, 24); islets('s', 750, 570, 34, 34, 18); islets('s', 765, 550, 50, 12, 10); islets('s', 570, 590, 70, 22, 16);
islets('s', 650, 598, 50, 16, 9); islets('s', 1088, 382, 40, 30, 20); islets('s', 1078, 352, 30, 16, 9); islets('s', 1020, 445, 28, 44, 20);
islets('s', 1052, 405, 20, 34, 12); islets('s', 1066, 550, 10, 120, 16); islets('s', 820, 570, 90, 14, 10); islets('s', 500, 602, 60, 8, 5);
islets('s', 972, 525, 50, 60, 24); islets('s', 300, 660, 30, 20, 6); islets('s', 1290, 693, 50, 10, 14); islets('s', 1335, 706, 60, 8, 12);
islets('s', 1425, 582, 20, 26, 10); islets('s', 1385, 592, 8, 10, 3); islets('s', 925, 678, 50, 26, 10); islets('s', 315, 675, 30, 16, 6);
islets('s', 1010, 695, 30, 22, 10); islets('s', 360, 706, 40, 8, 8); islets('s', 1070, 709, 12, 8, 4); islets('s', 955, 575, 30, 12, 8); islets('s', 1500, 530, 80, 20, 10);
</script>
</body>
</html>
